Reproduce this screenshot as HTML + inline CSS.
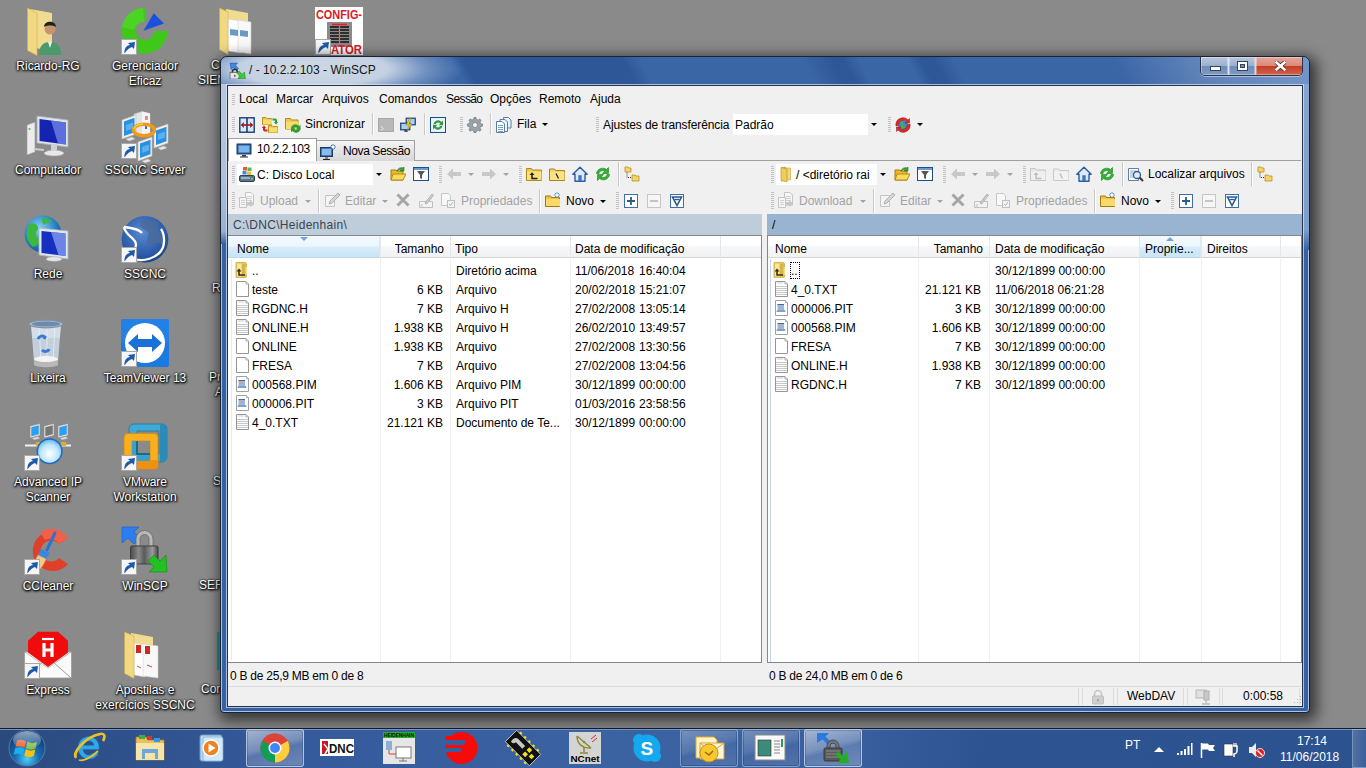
<!DOCTYPE html>
<html><head><meta charset="utf-8">
<style>
*{box-sizing:border-box}
html,body{margin:0;padding:0}
body{width:1366px;height:768px;position:relative;overflow:hidden;background:#8a8a8a;font-family:"Liberation Sans",sans-serif;font-size:12px;color:#000}
.a{position:absolute}
.t{position:absolute;white-space:nowrap;line-height:14px}
.r{text-align:right}
svg.i{position:absolute;width:16px;height:16px;overflow:visible}
.di{position:absolute;width:96px;text-align:center;color:#fff;font-size:12px;line-height:15px;text-shadow:0 0 2px #000,1px 1px 2px #000,0 1px 3px #000}
.dic{position:absolute;width:48px;height:48px;overflow:visible}
#frame{left:220px;top:56px;width:1090px;height:657px;border:1px solid #1a2333;border-radius:7px 7px 4px 4px;
 background:#3462a3;box-shadow:3px 4px 14px 4px rgba(0,0,0,.6), inset 0 0 0 1px rgba(215,228,248,.75);overflow:hidden}
#client{left:227px;top:85px;width:1076px;height:622px;background:#f0f0f0;border:1px solid #25324a;box-shadow:0 0 0 1px rgba(220,232,250,.7)}
.grip{position:absolute;width:3px;background:repeating-linear-gradient(#c2c2c2 0 1px,transparent 1px 2px)}
.sep{position:absolute;width:2px;border-left:1px solid #c8c8c8;border-right:1px solid #fff}
.dis{color:#a3a3a3}
.dd{position:absolute;width:0;height:0;border-left:3px solid transparent;border-right:3px solid transparent;border-top:3px solid #000}
.dd.g{border-top-color:#a3a3a3}
.combo{position:absolute;background:#fff;height:21px}
.combo .btn{position:absolute;right:0;top:0;width:12px;height:21px;background:#f0f0f0}
.combo .btn:after{content:"";position:absolute;left:3px;top:9px;border-left:3px solid transparent;border-right:3px solid transparent;border-top:3px solid #000}
.list{position:absolute;background:#fff;border:1px solid #828790}
.hdr{position:absolute;height:22px;background:linear-gradient(#fff 0,#fff 45%,#f6f7f9 50%,#f1f2f4 100%);border-bottom:1px solid #d5d5d5}
.hsep{position:absolute;top:0;width:1px;height:22px;background:#e4e6ea}
.csep{position:absolute;width:1px;background:#f0f0f0}
.tab{position:absolute}
#taskbar{left:0;top:728px;width:1366px;height:40px;background:linear-gradient(100deg,#2a4a7e 0,#35599a 20%,#3b63a2 45%,#395f9e 62%,#2d5391 72%,#2c5290 100%);border-top:1px solid #0f1b2e;box-shadow:inset 0 1px 0 #7593c4}
.tb{position:absolute;top:1px;height:38px;width:58px;border-radius:3px}
.tb.on{border:1px solid rgba(220,232,255,.55);background:linear-gradient(rgba(255,255,255,.28),rgba(255,255,255,.12));box-shadow:inset 0 0 0 1px rgba(0,0,0,.15)}
</style></head><body>
<svg width="0" height="0" style="position:absolute">
<defs>
<symbol id="fold" viewBox="0 0 16 16"><path d="M1 3h5l1 1.5h8v10H1z" fill="#f4d46a" stroke="#b8901c" stroke-width="1"/><path d="M1.5 6h13.5v8H1.5z" fill="#fbe490"/></symbol>
<symbol id="file" viewBox="0 0 16 16"><path d="M1.5 .5h9.5l2.5 2.5v12.5h-12z" fill="#fff" stroke="#959595"/><path d="M11 .5v2.5h2.5" fill="#f0f0f0" stroke="#a8a8a8"/></symbol>
<symbol id="txt" viewBox="0 0 16 16"><path d="M1.5 .5h9.5l2.5 2.5v12.5h-12z" fill="#fff" stroke="#959595"/><path d="M2 5.5h11M2 7.5h11M2 9.5h11M2 11.5h11M2 13.5h11" stroke="#c4c8cc"/><path d="M3 2.5l1-1 1 1 1-1 1 1 1-1 1 1" fill="none" stroke="#b0b0b0" stroke-width=".7"/><path d="M11 .5v2.5h2.5" fill="#f0f0f0" stroke="#a8a8a8"/></symbol>
<symbol id="pim" viewBox="0 0 16 16"><path d="M1.5 .5h10l2 2v13h-12z" fill="#fff" stroke="#a0a0a0"/><path d="M11.5 .5v2h2" fill="#f0f0f0" stroke="#b0b0b0"/><rect x="3.5" y="4" width="6.5" height="6" fill="#9ab8dc"/><rect x="3.5" y="4" width="6.5" height="1" fill="#4a6a98"/><rect x="4.8" y="6" width="2" height="2" fill="#e0a070"/><path d="M3 10h8l.5 2h-9z" fill="#7fa2c8"/></symbol>
<symbol id="updir" viewBox="0 0 16 16"><path d="M1 2h5l1 1.5h8v11H1z" fill="#f0cc50" stroke="#b08a10"/><path d="M2 5h13v9H2z" fill="#f9df7a"/><path d="M10 6v5H5M7 9l-2 2 2 2" fill="none" stroke="#202020" stroke-width="1.3"/></symbol>
<symbol id="mon" viewBox="0 0 16 16"><rect x="1" y="2" width="14" height="10" fill="#2d5d9a" stroke="#1d3a60"/><rect x="2.5" y="3.5" width="11" height="7" fill="#79b4ec"/><path d="M6 13h4v1.5H6z" fill="#333"/><path d="M4 15h8" stroke="#222"/></symbol>
<symbol id="filter" viewBox="0 0 16 16"><rect x=".5" y="1.5" width="15" height="13" fill="#fff" stroke="#1d4f8f"/><rect x="1" y="2" width="14" height="2" fill="#6f9ad0"/><path d="M4 5h8l-3 4v4l-2-1V9z" fill="#555"/></symbol>
<symbol id="openf" viewBox="0 0 16 16"><path d="M1 4h5l1 1h6v9H1z" fill="#e9b830" stroke="#a47a08"/><path d="M3 8h13l-3 6H1z" fill="#f8dc60" stroke="#b88a10"/><path d="M7 5c1-3 4-4 6-3l1-1v4h-4l1.2-1c-1.5-1-3 0-4 1z" fill="#3aa33a" stroke="#1e7a1e" stroke-width=".6"/></symbol>
<symbol id="home" viewBox="0 0 16 16"><path d="M8 1.2L.8 8.3h2.2v7h10v-7h2.2z" fill="#dfe9f6" stroke="#2a5aa0" stroke-width="1.4" stroke-linejoin="round"/><rect x="6.3" y="9.2" width="3.4" height="6" fill="#3a78c8"/></symbol>
<symbol id="refr" viewBox="0 0 16 16"><path d="M1.5 7.5C2 3 7.5 .5 11.5 3.5L13.5 1.5v6h-6l2.2-2.2C7.5 3.8 4.5 4.8 4 7.5z" fill="#2fb52f" stroke="#17801a" stroke-width=".6"/><path d="M14.5 8.5C14 13 8.5 15.5 4.5 12.5L2.5 14.5v-6h6l-2.2 2.2c2.2 1.5 5.2.5 5.7-2.2z" fill="#2fb52f" stroke="#17801a" stroke-width=".6"/></symbol>
<symbol id="tree" viewBox="0 0 16 16"><path d="M1 1h3l1 1h2v4H1z" fill="#f4d46a" stroke="#b8901c" stroke-width=".8"/><path d="M8 9h3l1 1h3v5H8z" fill="#f4d46a" stroke="#b8901c" stroke-width=".8"/><path d="M3 6.5v5h4.5" fill="none" stroke="#333" stroke-dasharray="1 1"/></symbol>
<symbol id="parentd" viewBox="0 0 16 16"><path d="M.5 2.5h5l1 1.5h9v10.5H.5z" fill="#eec850" stroke="#b08a18"/><path d="M1 5.5h14.5v8.5H1z" fill="#fae07c"/><path d="M6 8v4.5h5.5" fill="none" stroke="#1a1a1a" stroke-width="1.5"/><path d="M3.5 9L6 6.3 8.5 9z" fill="#1a1a1a"/></symbol>
<symbol id="updir2" viewBox="0 0 16 16"><path d="M3 .5h9.5l1 1.5v13l-1 .8H3.5L3 15z" fill="#e6c65a" stroke="#c8a840" stroke-width=".8"/><path d="M4 1.5h4.5v13H4z" fill="#f6e6a0"/><path d="M9 2h3.5v12H9z" fill="#d8b440"/><path d="M12.5 5h1.5v8h-1.5z" fill="#f2dc88"/><path d="M6 8.5v4.5h6" fill="none" stroke="#3a3020" stroke-width="1.6"/><path d="M3.5 9.5L6 6.5l2.5 3z" fill="#3a3020"/></symbol>
<symbol id="rootd" viewBox="0 0 16 16"><path d="M.5 3h5l1 1.5h9v10H.5z" fill="#f4d46a" stroke="#a8841a"/><path d="M1 6h14.5v8H1z" fill="#fae287"/><path d="M7 7.5l2.5 5" stroke="#222" stroke-width="1.2"/></symbol>
<symbol id="plus" viewBox="0 0 16 16"><rect x="1.5" y="1.5" width="13" height="13" fill="#fff" stroke="#3d6ea6"/><path d="M8 4v8M4 8h8" stroke="#2a5a90" stroke-width="1.8"/></symbol>
<symbol id="minus" viewBox="0 0 16 16"><rect x="1.5" y="1.5" width="13" height="13" fill="#f6f6f6" stroke="#c6c6c6"/><path d="M4 8h8" stroke="#c0c0c0" stroke-width="1.8"/></symbol>
<symbol id="fsel" viewBox="0 0 16 16"><rect x="1.5" y="1.5" width="13" height="13" fill="#fff" stroke="#3d6ea6"/><path d="M3.5 4h9L8 12.5z" fill="none" stroke="#2a5a90" stroke-width="1.6"/><path d="M5.5 6.5h5" stroke="#2a5a90" stroke-width="1.4"/></symbol>
<symbol id="newf" viewBox="0 0 16 16"><path d="M.5 4h5l1 1.5h8v9H.5z" fill="#eec348" stroke="#a47a10"/><path d="M1 7h14v7H1z" fill="#f8da6a"/><path d="M12 0v6M9 3h6M10 1l4 4M14 1l-4 4" stroke="#5a8cc8" stroke-width="1"/><circle cx="12" cy="3" r="1.5" fill="#fff"/></symbol>
<symbol id="xdel" viewBox="0 0 16 16"><path d="M2.5 2.5l11 11M13.5 2.5l-11 11" stroke="#a6a6a6" stroke-width="3"/></symbol>
<symbol id="edit" viewBox="0 0 16 16"><path d="M1.5 3.5h9v11h-9z" fill="#f4f4f4" stroke="#c4c4c4"/><path d="M5 12l1-3 8-8 2 2-8 8z" fill="#d6d6d6" stroke="#b0b0b0"/></symbol>
<symbol id="ren" viewBox="0 0 16 16"><path d="M1.5 9.5h13v6h-13z" fill="#f4f4f4" stroke="#c0c0c0"/><text x="2.5" y="14.5" font-size="5" fill="#b0b0b0" font-family="Liberation Sans">x</text><path d="M7 11l7-9 1.5 1.2-7 9z" fill="#d0d0d0" stroke="#b0b0b0"/></symbol>
<symbol id="props" viewBox="0 0 16 16"><path d="M1.5 1.5h7l2 2v10h-9z" fill="#f8f8f8" stroke="#c6c6c6"/><rect x="7.5" y="8.5" width="7" height="7" fill="#f4f4f4" stroke="#c0c0c0"/><path d="M9 12l1.5 1.5L13 10" fill="none" stroke="#b0b0b0"/></symbol>
<symbol id="upl" viewBox="0 0 16 16"><path d="M6.5 .5h5.5l2.5 2.5v10h-8z" fill="#f8f8f8" stroke="#c4c4c4"/><path d="M8 4.5h5M8 6.5h5M8 8.5h5" stroke="#d0d0d0"/><path d="M.5 5.5h7v10h-7z" fill="#f6f6f6" stroke="#c4c4c4"/><path d="M2 8.5h4M2 10.5h4M2 12.5h4" stroke="#d0d0d0"/><path d="M8 10h3V8l4 3.5-4 3.5v-2H8z" fill="#c6c6c6"/></symbol>
<symbol id="back" viewBox="0 0 16 16"><path d="M1 8l6-5.5V6h8v4H7v3.5z" fill="#c8c8c8"/></symbol>
<symbol id="fwd" viewBox="0 0 16 16"><path d="M15 8L9 2.5V6H1v4h8v3.5z" fill="#c8c8c8"/></symbol>
<symbol id="pdis" viewBox="0 0 16 16"><path d="M.5 2.5h5l1 1.5h9v10.5H.5z" fill="#e8e8e8" stroke="#c4c4c4"/><path d="M1 5.5h14.5v8.5H1z" fill="#f0f0f0"/><path d="M6 8v4.5h5.5" fill="none" stroke="#bcbcbc" stroke-width="1.5"/><path d="M3.5 9L6 6.3 8.5 9z" fill="#bcbcbc"/></symbol>
<symbol id="rdis" viewBox="0 0 16 16"><path d="M.5 3h5l1 1.5h9v10H.5z" fill="#ececec" stroke="#c8c8c8"/><path d="M1 6h14.5v8H1z" fill="#f2f2f2"/><path d="M7 7.5l2.5 5" stroke="#bcbcbc" stroke-width="1.2"/></symbol>
<symbol id="find" viewBox="0 0 16 16"><path d="M.5 2.5h10v12H.5z" fill="#fff" stroke="#5f7fa8"/><path d="M2 5h6M2 7h4M2 9h4M2 11h5" stroke="#8aa8cc"/><circle cx="9" cy="9" r="3.5" fill="#dceeff" stroke="#3a5a80" stroke-width="1.3"/><path d="M11.5 11.5l3.5 3.5" stroke="#333" stroke-width="2"/></symbol>
<symbol id="drive" viewBox="0 0 16 16"><rect x=".5" y="9.5" width="15" height="6" rx="1.5" fill="#59768a" stroke="#2f4350"/><rect x="2" y="11" width="9" height="2" fill="#9ab4c4"/><rect x="12" y="12" width="2" height="1.5" fill="#6fd06f"/><path d="M4 1h4v3.5H4z" fill="#e85a2a"/><path d="M8.5 1.5h4v3.5h-4z" fill="#58b848"/><path d="M3.5 5h4v3.5h-4z" fill="#3a8ae0"/><path d="M8 5.5h4v3.5H8z" fill="#f2c020"/></symbol>
<symbol id="cmp" viewBox="0 0 16 16"><rect x=".8" y=".8" width="14.4" height="14.4" fill="#dde9f6" stroke="#1c3c78" stroke-width="1.4"/><path d="M8 1v14" stroke="#1c3c78" stroke-width="1.6"/><path d="M3 8h10" stroke="#a01818" stroke-width="1.6"/><path d="M1.8 8l3-3v6zM14.2 8l-3-3v6z" fill="#a01818"/></symbol>
<symbol id="syncf" viewBox="0 0 16 16"><path d="M.5 .5h3.5l1 1h4.5v6H.5z" fill="#eec44a" stroke="#b88a10" stroke-width=".9"/><path d="M1 2.5h9v5H1z" fill="#f8dc6c"/><path d="M6.5 8.5h3.5l1 1h4.5v6h-9z" fill="#eec44a" stroke="#b88a10" stroke-width=".9"/><path d="M7 10.5h8.5v5H7z" fill="#f8dc6c"/><path d="M10.5 1.5h2.5a2 2 0 0 1 2 2V5h1.2l-2.2 2.5L11.8 5H13V3.5h-2.5z" fill="#2ea02e"/><path d="M5.5 14.5H3a2 2 0 0 1-2-2V11H-.2L2 8.5 4.2 11H3v1.5h2.5z" fill="#d42020"/></symbol>
<symbol id="sync" viewBox="0 0 16 16"><path d="M.5 1.5h5l1 1.5h6.5v9H.5z" fill="#eec44a" stroke="#b88a10"/><path d="M1 4.5h12.5v7.5H1z" fill="#f8dc6c"/><path d="M6 11.5a4.5 4.5 0 0 1 8-2.5l1.5-1.3v4.8h-4.8l1.6-1.4A2.6 2.6 0 0 0 8 11.5z" fill="#30a030"/><path d="M15.5 11.5a4.5 4.5 0 0 1-8 2.5L6 15.3v-4.8h4.8l-1.6 1.4a2.6 2.6 0 0 0 4.3-.4z" fill="#30a030"/></symbol>
<symbol id="cons" viewBox="0 0 16 16"><rect x=".5" y="1.5" width="15" height="13" fill="#b8b8b8" stroke="#a8a8a8"/><path d="M3 9.5l2.5 2L3 13.5" fill="none" stroke="#e8e8e8"/></symbol>
<symbol id="putty" viewBox="0 0 16 16"><rect x="6" y="1" width="9.5" height="7" fill="#3d6aa6" stroke="#20406a" stroke-width=".8"/><rect x="7" y="2" width="7.5" height="5" fill="#a6d0f4"/><rect x=".5" y="6" width="9.5" height="7" fill="#3d6aa6" stroke="#20406a" stroke-width=".8"/><rect x="1.5" y="7" width="7.5" height="5" fill="#a6d0f4"/><path d="M4 14h4M6 13v2" stroke="#222"/><path d="M10 1L6 8h3l-2 6 5-7H9l2-6z" fill="#f6d020" stroke="#9a7a00" stroke-width=".5"/></symbol>
<symbol id="syncb" viewBox="0 0 16 16"><rect x=".5" y=".5" width="15" height="15" fill="#e8f2fc" stroke="#1f4a86"/><path d="M3.5 7a4.5 4.5 0 0 1 8-2l1.5-1.2v4.4H8.6l1.6-1.4a2.6 2.6 0 0 0-4.6.2z" fill="#2e9a3a"/><path d="M12.5 9a4.5 4.5 0 0 1-8 2L3 12.2V7.8h4.4l-1.6 1.4a2.6 2.6 0 0 0 4.6-.2z" fill="#2e9a3a"/></symbol>
<symbol id="gear" viewBox="0 0 16 16"><path d="M7 .5h2l.4 2 1.6.7 1.7-1.2 1.4 1.4-1.2 1.7.7 1.6 2 .4v2l-2 .4-.7 1.6 1.2 1.7-1.4 1.4-1.7-1.2-1.6.7-.4 2H7l-.4-2-1.6-.7-1.7 1.2-1.4-1.4 1.2-1.7-.7-1.6-2-.4V7l2-.4.7-1.6-1.2-1.7 1.4-1.4 1.7 1.2L6.6 2.5z" fill="#9aa2aa" stroke="#6c747c" stroke-width=".7"/><circle cx="8" cy="8" r="2.6" fill="#f0f0f0" stroke="#6c747c" stroke-width=".7"/></symbol>
<symbol id="queue" viewBox="0 0 16 16"><path d="M7.5 .5h5l2.5 2.5v8h-7.5z" fill="#e8f0fa" stroke="#5a7ea8"/><path d="M4 2.5h5l2.5 2.5v9.5H4z" fill="#eef4fb" stroke="#5a7ea8"/><path d="M.5 4.5h5.5l2.5 2.5v8.5H.5z" fill="#fff" stroke="#5a7ea8"/><path d="M2 8.5h5M2 10.5h5M2 12.5h5M2 14.5h5" stroke="#7c9cc4"/></symbol>
<symbol id="tset" viewBox="0 0 16 16"><circle cx="8" cy="8" r="5" fill="#3a8ad0"/><path d="M5 5c2 0 3 2 2 4s2 2 3 1" stroke="#4ab04a" stroke-width="2" fill="none"/><path d="M1 9a7 7 0 0 1 12-6l1.5-1.5V6h-4.5L12 4.6A5 5 0 0 0 3.5 8.5z" fill="#e02828" stroke="#901010" stroke-width=".5"/><path d="M15 7a7 7 0 0 1-12 6l-1.5 1.5V10H6l-1.6 1.4A5 5 0 0 0 12.5 7.5z" fill="#e02828" stroke="#901010" stroke-width=".5"/></symbol>
<symbol id="newsess" viewBox="0 0 16 16"><rect x=".5" y="3.5" width="12" height="9" fill="#2d5d9a" stroke="#1d3a60"/><rect x="1.7" y="4.7" width="9.6" height="6.6" fill="#86bdf0"/><path d="M5 13.5h3v1H5z" fill="#333"/><path d="M3 15.5h7" stroke="#222"/><path d="M13 0v6M10 3h6M11 1l4 4M15 1l-4 4" stroke="#3a6ab0" stroke-width="1"/><circle cx="13" cy="3" r="1.6" fill="#fff"/></symbol>
<symbol id="sfold" viewBox="0 0 16 16"><path d="M3 1.5l5-1v14l-5 1z" fill="#d8b440"/><path d="M3.5 2h9v12h-9z" fill="#f4d878" stroke="#c0a040" stroke-width=".6"/><path d="M3 1.5l6 1.5v13l-6-1.5z" fill="#f0cc58" stroke="#b0902a" stroke-width=".6"/></symbol>
<symbol id="lock" viewBox="0 0 16 16"><path d="M4.5 7V5a3.5 3.5 0 0 1 7 0v2" fill="none" stroke="#c4c4c4" stroke-width="1.6"/><rect x="2.5" y="7" width="11" height="8" rx="1" fill="#cfcfcf" stroke="#bdbdbd"/><rect x="7" y="10" width="2" height="2.5" fill="#a8a8a8"/></symbol>
<symbol id="net" viewBox="0 0 16 16"><rect x="1" y="1" width="10" height="8" fill="#d6d6d6" stroke="#bdbdbd"/><path d="M2 3h8M2 5h8M2 7h8" stroke="#eaeaea"/><rect x="9" y="2" width="5" height="9" fill="#c8c8c8" stroke="#b0b0b0"/><path d="M11 11v3M7 15h8" stroke="#b8b8b8" stroke-width="1.3"/></symbol>
</defs></svg>
<svg class="dic" style="left:24px;top:7px" viewBox="0 0 48 48"><path d="M6 2l22 4v38L6 40z" fill="#f0dc90"/><path d="M3.5 1l9.5 5v42.5l-9.5-5z" fill="#f2d880" stroke="#d0b050" stroke-width=".6"/>
<circle cx="26" cy="22" r="5.5" fill="#c89470"/><path d="M20 20c0-7 12-7 12 0-2-2-10-2-12 0z" fill="#222"/><path d="M15 48c0-9 4-13 11-13s11 4 11 13z" fill="#4a9a6a"/><path d="M24 35h4l-2 6z" fill="#eee"/></svg>
<div class="di" style="left:0px;top:59px;width:96px">Ricardo-RG</div>
<svg class="dic" style="left:24px;top:111px" viewBox="0 0 48 48"><path d="M3 14l8-3v30l-8 3z" fill="#ececec" stroke="#9a9a9a" stroke-width=".6"/><circle cx="5.5" cy="18" r="1" fill="#3c3"/><path d="M13 5l31 4v27l-31-4z" fill="#dfe4ea" stroke="#a8b0ba" stroke-width=".8"/><path d="M15.5 8l26.5 3.5v22L15.5 30z" fill="#1424b0"/><path d="M27 9.5l15 2v22l-8-1z" fill="#7a90f0" opacity=".7"/><path d="M20 42c3-4 17-4 20 0 0 4-20 4-20 0z" fill="#e8e8e8" stroke="#aaa" stroke-width=".6"/><path d="M27 33h6v6h-6z" fill="#d0d0d0"/><path d="M10 38l10 1" stroke="#ccc" stroke-width="2"/></svg>
<div class="di" style="left:0px;top:163px;width:96px">Computador</div>
<svg class="dic" style="left:24px;top:215px" viewBox="0 0 48 48"><defs><radialGradient id="gl" cx=".4" cy=".35" r=".7"><stop offset="0" stop-color="#8fd0f8"/><stop offset=".6" stop-color="#2a86c8"/><stop offset="1" stop-color="#134a8a"/></radialGradient></defs><circle cx="19" cy="19" r="18.5" fill="url(#gl)"/><path d="M5 9c4-2 8 0 9 3s-3 5-2 8 4 3 3 7-4 4-6 5c-4-3-7-9-6-15zM18 3c3 1 7 0 10 3-2 2-5 1-7 3s-3-2-3-6zM27 14c3 0 6 2 8 1l1 6c-3 0-6-2-9-4z" fill="#3cb83c"/>
<path d="M15 13l29 3v28l-29-4z" fill="#dfe6ee" stroke="#aab4c0" stroke-width=".8"/><path d="M17.5 16l24 2.5v22.5L17.5 38z" fill="#1530c0"/><path d="M27 17l14.5 1.5V41l-7-1z" fill="#8aa0f0" opacity=".75"/><path d="M22 44c2-3 14-3 16 0 0 3-16 3-16 0z" fill="#e8e8e8" stroke="#b0b0b0" stroke-width=".6"/></svg>
<div class="di" style="left:0px;top:267px;width:96px">Rede</div>
<svg class="dic" style="left:24px;top:319px" viewBox="0 0 48 48"><path d="M7 5h30l-3 38c-3 3-21 3-24 0z" fill="#c9d6e2" opacity=".9"/><path d="M7 5h30l-1.2 14H8.2z" fill="#dbe4ee" opacity=".7"/><path d="M23 8v34M15 7l2 35M31 7l-2 35" stroke="#e8eef6" stroke-width="1" opacity=".8"/><ellipse cx="22" cy="5" rx="17" ry="3.8" fill="#a6bbd0" stroke="#7f93a8" stroke-width="1.2"/><ellipse cx="22" cy="5" rx="14" ry="2.4" fill="#6e8aa8"/><path d="M10 40c3 4 20 4 24 0v6c-3 3-21 3-24 0z" fill="#b8b8b8"/><ellipse cx="22" cy="40" rx="12" ry="3" fill="#f4f4f4"/><path d="M14 20c1-3 5-4 7-2l-1 2M18 31c2 2 6 2 7-1" stroke="#3a78d8" stroke-width="3" fill="none"/></svg>
<div class="di" style="left:0px;top:371px;width:96px">Lixeira</div>
<svg class="dic" style="left:24px;top:423px" viewBox="0 0 48 48"><g id="m1"><path d="M6 3l10-2.5v12L6 15z" fill="#e8e8e8" stroke="#888" stroke-width=".6"/><path d="M7.3 4.3l7.5-2v9l-7.5 2z" fill="#2aa0ee"/><path d="M8 15l6-1.5 2 2-6 1.5z" fill="#ddd" stroke="#999" stroke-width=".5"/></g>
<path d="M20 3l10-2.5v12L20 15z" fill="#e8e8e8" stroke="#888" stroke-width=".6"/><path d="M21.3 4.3l7.5-2v9l-7.5 2z" fill="#777"/>
<path d="M34 3l10-2.5v12L34 15z" fill="#e8e8e8" stroke="#888" stroke-width=".6"/><path d="M35.3 4.3l7.5-2v9l-7.5 2z" fill="#2aa0ee"/><path d="M36 15l6-1.5 2 2-6 1.5z" fill="#ddd" stroke="#999" stroke-width=".5"/>
<path d="M1 22.5h46" stroke="#f0f0f0" stroke-width="2"/><rect x="12" y="19" width="5" height="4" fill="#e0b020"/><rect x="37" y="19" width="5" height="4" fill="#e0b020"/>
<defs><radialGradient id="mg" cx=".5" cy=".6" r=".6"><stop offset="0" stop-color="#fff"/><stop offset=".6" stop-color="#bfe6ff"/><stop offset="1" stop-color="#5ab4f0"/></radialGradient></defs><circle cx="25.6" cy="28.2" r="12.3" fill="url(#mg)" stroke="#1a6ac8" stroke-width="1.5"/><g transform="translate(0,32)"><rect x=".5" y=".5" width="15" height="15" fill="#f6f6f6" stroke="#a8a8a8"/><path d="M3.5 14.5C3 9.5 5.5 6.5 9 6L7 4l7-1-1 7-2-2c-2.5.5-4.5 2.5-7.5 6.5z" fill="#1e5aa8"/></g></svg>
<div class="di" style="left:-7px;top:475px;width:110px">Advanced IP<br>Scanner</div>
<svg class="dic" style="left:24px;top:527px" viewBox="0 0 48 48"><path d="M44 11A20 20 0 1 0 44 37L35 31A10.5 10.5 0 1 1 35 17z" fill="#e0402a"/><path d="M44 11A20 20 0 0 0 16 5l5 8a10.5 10.5 0 0 1 14 4z" fill="#f0604a"/><path d="M31 6L23 23" stroke="#2a74d0" stroke-width="3" stroke-linecap="round"/><path d="M17 22l9 4-4 6-8-4z" fill="#3a86e0"/><path d="M14 28l8 4c-3 8-8 14-16 15-3-2-4-4-4-6 6-2 9-7 12-13z" fill="#f0cc88" stroke="#d0a060" stroke-width=".6"/><g transform="translate(0,32)"><rect x=".5" y=".5" width="15" height="15" fill="#f6f6f6" stroke="#a8a8a8"/><path d="M3.5 14.5C3 9.5 5.5 6.5 9 6L7 4l7-1-1 7-2-2c-2.5.5-4.5 2.5-7.5 6.5z" fill="#1e5aa8"/></g></svg>
<div class="di" style="left:0px;top:579px;width:96px">CCleaner</div>
<svg class="dic" style="left:24px;top:631px" viewBox="0 0 48 48"><path d="M0.5 21h47v26h-47z" fill="#fafafa" stroke="#999" stroke-width=".8"/><path d="M1 47l19-17M47 47L28 30" stroke="#9a9a9a" stroke-width="1"/><path d="M14 .8h20l10 9v12L24 36 4 21.5V9.8z" fill="#f00c0c"/><path d="M1 21l23 16 23-16" fill="none" stroke="#aaa" stroke-width=".8"/><path d="M18 8h12" stroke="#fff" stroke-width="2.2"/><path d="M20 12v14M28 12v14M20 19h8" stroke="#fff" stroke-width="3.2"/><g transform="translate(0,32)"><rect x=".5" y=".5" width="15" height="15" fill="#f6f6f6" stroke="#a8a8a8"/><path d="M3.5 14.5C3 9.5 5.5 6.5 9 6L7 4l7-1-1 7-2-2c-2.5.5-4.5 2.5-7.5 6.5z" fill="#1e5aa8"/></g></svg>
<div class="di" style="left:0px;top:683px;width:96px">Express</div>
<svg class="dic" style="left:121px;top:7px" viewBox="0 0 48 48"><path d="M25 .7A23 23 0 1 0 46.8 24H33.5A9.5 9.5 0 1 1 25 14z" fill="#3fc81a"/><path d="M22 1A23 23 0 0 0 1 20l12 3a10 10 0 0 1 10-8z" fill="#52d82a" opacity=".7"/><path d="M32.7 6.2L43 16.4 22.5 23.7z" fill="#1a50e0"/><g transform="translate(0,32)"><rect x=".5" y=".5" width="15" height="15" fill="#f6f6f6" stroke="#a8a8a8"/><path d="M3.5 14.5C3 9.5 5.5 6.5 9 6L7 4l7-1-1 7-2-2c-2.5.5-4.5 2.5-7.5 6.5z" fill="#1e5aa8"/></g></svg>
<div class="di" style="left:97px;top:59px;width:96px">Gerenciador<br>Eficaz</div>
<svg class="dic" style="left:121px;top:111px" viewBox="0 0 48 48"><path d="M13 3l8-2.5 8 2v20l-8 2.5-8-2z" fill="#e4e4e4" stroke="#b8b8b8" stroke-width=".6"/><path d="M21 .5l8 2v20l-8 2.5z" fill="#f4f4f4"/><path d="M24 6h3M24 8h3" stroke="#c03030" stroke-width="1"/><path d="M24 14h2v4h-2z" fill="#3a6ac8"/>
<g id="mo"><path d="M1 9l14-5v19l-14 5z" fill="#f0f0f0" stroke="#c0c0c0" stroke-width=".6"/><path d="M3 10.5l10.5-3.8v14.5L3 25z" fill="#2a90e0"/><path d="M5 14l7-2.5v6L5 20z" fill="#7cc8f8" opacity=".6"/><path d="M5 28l6-2 3 2-6 2z" fill="#e6e6e6" stroke="#bbb" stroke-width=".5"/></g>
<g transform="translate(32,9)"><path d="M1 9l14-5v19l-14 5z" fill="#f0f0f0" stroke="#c0c0c0" stroke-width=".6"/><path d="M3 10.5l10.5-3.8v14.5L3 25z" fill="#2a90e0"/><path d="M5 14l7-2.5v6L5 20z" fill="#7cc8f8" opacity=".6"/><path d="M5 28l6-2 3 2-6 2z" fill="#e6e6e6" stroke="#bbb" stroke-width=".5"/></g>
<g transform="translate(16,22)"><path d="M1 9l14-5v19l-14 5z" fill="#f0f0f0" stroke="#c0c0c0" stroke-width=".6"/><path d="M3 10.5l10.5-3.8v14.5L3 25z" fill="#2a90e0"/><path d="M5 14l7-2.5v6L5 20z" fill="#7cc8f8" opacity=".6"/><path d="M5 28l6-2 3 2-6 2z" fill="#e6e6e6" stroke="#bbb" stroke-width=".5"/></g>
<ellipse cx="23" cy="19" rx="10.5" ry="5.8" fill="none" stroke="#f29a18" stroke-width="3.4"/><path d="M13 18a10 5.5 0 0 1 9-5" stroke="#fcd040" stroke-width="1.5" fill="none"/><g transform="translate(0,32)"><rect x=".5" y=".5" width="15" height="15" fill="#f6f6f6" stroke="#a8a8a8"/><path d="M3.5 14.5C3 9.5 5.5 6.5 9 6L7 4l7-1-1 7-2-2c-2.5.5-4.5 2.5-7.5 6.5z" fill="#1e5aa8"/></g></svg>
<div class="di" style="left:90px;top:163px;width:110px">SSCNC Server</div>
<svg class="dic" style="left:121px;top:215px" viewBox="0 0 48 48"><defs><radialGradient id="sg" cx=".45" cy=".35" r=".7"><stop offset="0" stop-color="#5a8ad0"/><stop offset=".7" stop-color="#2a5aa8"/><stop offset="1" stop-color="#173e7e"/></radialGradient></defs><circle cx="24" cy="24.3" r="23.3" fill="url(#sg)"/><path d="M20 6c6-3 14-2 18 3-3 3-2 8 2 9s4 8 2 12c-3-3-8-3-10 0s-6 1-6-4 4-8 0-10-8-4-6-10z" fill="#4a6a98" opacity=".8"/><path d="M3 12c8 1 15 2 18 6" stroke="#fff" stroke-width="2.3" fill="none"/><path d="M3 12c2 10 12 10 12 18s-10 8-2 14c10 3 22-1 27-8s3-18 0-22" stroke="#fff" stroke-width="2.3" fill="none"/><g transform="translate(0,32)"><rect x=".5" y=".5" width="15" height="15" fill="#f6f6f6" stroke="#a8a8a8"/><path d="M3.5 14.5C3 9.5 5.5 6.5 9 6L7 4l7-1-1 7-2-2c-2.5.5-4.5 2.5-7.5 6.5z" fill="#1e5aa8"/></g></svg>
<div class="di" style="left:97px;top:267px;width:96px">SSCNC</div>
<svg class="dic" style="left:121px;top:319px" viewBox="0 0 48 48"><rect x="0" y="0" width="48" height="48" rx="2" fill="#1b7ae0"/><rect x="0" y="0" width="48" height="24" rx="2" fill="#2a86ea" opacity=".6"/><circle cx="24" cy="24" r="20" fill="#fff"/><path d="M7 24l10-9v5h14v-5l10 9-10 9v-5H17v5z" fill="#1a72d8"/><g transform="translate(0,32)"><rect x=".5" y=".5" width="15" height="15" fill="#f6f6f6" stroke="#a8a8a8"/><path d="M3.5 14.5C3 9.5 5.5 6.5 9 6L7 4l7-1-1 7-2-2c-2.5.5-4.5 2.5-7.5 6.5z" fill="#1e5aa8"/></g></svg>
<div class="di" style="left:90px;top:371px;width:110px">TeamViewer 13</div>
<svg class="dic" style="left:121px;top:423px" viewBox="0 0 48 48"><path d="M13 1h28a5 5 0 0 1 5 5v28a5 5 0 0 1-5 5H13a5 5 0 0 1-5-5V6a5 5 0 0 1 5-5zM16 8v23h22V8z" fill="#40aad4" fill-rule="evenodd" stroke="#1a7aa0" stroke-width=".8"/><path d="M41 1a5 5 0 0 1 5 5v28a5 5 0 0 1-5 5h-2V1z" fill="#2a8ab8"/>
<path d="M7 10.5h26a4 4 0 0 1 4 4V42a4 4 0 0 1-4 4H7a4 4 0 0 1-4-4V14.5a4 4 0 0 1 4-4zM11 18v20h18V18z" fill="#f8b020" fill-rule="evenodd" stroke="#d88a00" stroke-width=".8"/><path d="M3 37h34v5a4 4 0 0 1-4 4H7a4 4 0 0 1-4-4z" fill="#f09010"/><path d="M11 18h18v20H11z" fill="#3aa0cc"/><path d="M16 18h13v13H16z" fill="#8a8a8a"/><path d="M16 18v13h13" fill="none" stroke="#1a6a90" stroke-width="2"/><g transform="translate(0,32)"><rect x=".5" y=".5" width="15" height="15" fill="#f6f6f6" stroke="#a8a8a8"/><path d="M3.5 14.5C3 9.5 5.5 6.5 9 6L7 4l7-1-1 7-2-2c-2.5.5-4.5 2.5-7.5 6.5z" fill="#1e5aa8"/></g></svg>
<div class="di" style="left:97px;top:475px;width:96px">VMware<br>Workstation</div>
<svg class="dic" style="left:121px;top:527px" viewBox="0 0 48 48"><path d="M1 0h17l-5 5 6 6-6 6-6-6-6 5z" fill="#2a7ef0" stroke="#1a5ac0" stroke-width=".6"/><path d="M15 19v-7a8.5 8.5 0 0 1 17 0v7h-4v-7a4.5 4.5 0 0 0-9 0v7z" fill="#b8b8b8" stroke="#6a6a6a" stroke-width=".8"/>
<defs><linearGradient id="lb" x1="0" x2="1"><stop offset="0" stop-color="#4a4a4a"/><stop offset=".3" stop-color="#8a8a8a"/><stop offset=".5" stop-color="#5a5a5a"/><stop offset=".8" stop-color="#9a9a9a"/><stop offset="1" stop-color="#4a4a4a"/></linearGradient></defs><rect x="9.5" y="19" width="27.5" height="18" rx="1.5" fill="url(#lb)" stroke="#333" stroke-width=".8"/>
<path d="M46 45H28l5-5-6-6 6-6 6 6 6-6z" fill="#22c022" stroke="#128a12" stroke-width=".6"/><g transform="translate(0,32)"><rect x=".5" y=".5" width="15" height="15" fill="#f6f6f6" stroke="#a8a8a8"/><path d="M3.5 14.5C3 9.5 5.5 6.5 9 6L7 4l7-1-1 7-2-2c-2.5.5-4.5 2.5-7.5 6.5z" fill="#1e5aa8"/></g></svg>
<div class="di" style="left:97px;top:579px;width:96px">WinSCP</div>
<svg class="dic" style="left:121px;top:631px" viewBox="0 0 48 48"><path d="M10 2l22 4v38l-22-4z" fill="#f0dc90"/><path d="M13 12l11 2v32l-11-2z" fill="#fff" stroke="#ccc" stroke-width=".5"/><path d="M22 13l15 2v32l-15-2z" fill="#f8f8f8" stroke="#ccc" stroke-width=".5"/><path d="M15 14h5v8h-5zM24 15h5v8h-5z" fill="#cc2a20"/><path d="M16 35l4 2M26 34l5 2" stroke="#e04040" stroke-width="1"/><path d="M3.6 1l9.4 4v42.5l-9.4-5z" fill="#f2d880" stroke="#d0b050" stroke-width=".6"/></svg>
<div class="di" style="left:85px;top:683px;width:120px">Apostilas e<br>exercícios SSCNC</div>
<svg class="dic" style="left:218px;top:7px" viewBox="0 0 48 48"><path d="M8 2l22 4v38l-22-4z" fill="#f0dc90"/><path d="M10 12l13 2v32l-13-2z" fill="#fff" stroke="#ccc" stroke-width=".5"/><path d="M20 13l13 2v32l-13-2z" fill="#f8f8f8" stroke="#ccc" stroke-width=".5"/><path d="M12 22l8 1v6l-8-1zM22 23l8 1v6l-8-1z" fill="#6a9ac0"/><path d="M1.6 1l8.4 4v42.5l-8.4-5z" fill="#f2d880" stroke="#d0b050" stroke-width=".6"/></svg>
<svg class="dic" style="left:315px;top:7px" viewBox="0 0 48 48"><rect x="0" y="0" width="48" height="48" fill="#fff"/><text x="1" y="12" font-family="Liberation Sans" font-weight="bold" font-size="12" fill="#e01828" textLength="46" lengthAdjust="spacingAndGlyphs">CONFIG-</text><rect x="12" y="15" width="25" height="25" fill="#8a8a8a"/><path d="M15 20h19M15 23h19M15 26h19M15 29h19M15 32h19M15 35h19" stroke="#111" stroke-width="1.7"/><path d="M24.5 17v21" stroke="#ff6070" stroke-width="1.2"/><path d="M17 17.5h15" stroke="#e02030" stroke-width="1.5"/><text x="16" y="47" font-family="Liberation Sans" font-weight="bold" font-size="12" fill="#e01828" textLength="31" lengthAdjust="spacingAndGlyphs">ATOR</text><g transform="translate(0,32)"><rect x=".5" y=".5" width="15" height="15" fill="#f6f6f6" stroke="#a8a8a8"/><path d="M3.5 14.5C3 9.5 5.5 6.5 9 6L7 4l7-1-1 7-2-2c-2.5.5-4.5 2.5-7.5 6.5z" fill="#1e5aa8"/></g></svg>
<div class="di" style="left:211px;top:58px;width:auto;text-align:left">CONFIG</div>
<div class="di" style="left:198px;top:73px;width:auto;text-align:left">SIEMENS</div>
<div class="di" style="left:212px;top:281px;width:auto;text-align:left">Rede</div>
<div class="di" style="left:209px;top:370px;width:auto;text-align:left">Programas</div>
<div class="di" style="left:215px;top:385px;width:auto;text-align:left">Apostilas</div>
<div class="di" style="left:213px;top:474px;width:auto;text-align:left">Siemens</div>
<div class="di" style="left:199px;top:578px;width:auto;text-align:left">SERVIDOR</div>
<div class="di" style="left:201px;top:682px;width:auto;text-align:left">Configurações</div>
<div class="a" style="left:217px;top:632px;width:4px;height:38px;background:linear-gradient(90deg,#1a8a8a,#2ab0a8)"></div>
<div id="frame" class="a"></div>
<div class="a" style="left:221px;top:57px;width:1088px;height:28px;border-radius:6px 6px 0 0;background:linear-gradient(62deg,#3b66a6 6px,#3b66a6 215px,#2d5797 226px,#2d5797 366px,#3b66a6 382px,#3b66a6 525px,#2d5797 552px,#2d5797 560px,#3b66a6 575px,#3b66a6 618px,#2d5797 630px,#2d5797 641px,#3b66a6 659px,#3b66a6 800px,#5f83b9 871px,#7394c6 967px)"></div>
<div class="a" style="left:221px;top:57px;width:300px;height:28px;border-radius:6px 0 0 0;background:radial-gradient(ellipse 150px 34px at 92px 12px,rgba(206,216,228,1) 0,rgba(200,212,228,.97) 50%,rgba(150,175,210,.6) 75%,rgba(52,98,163,0) 100%)"></div>
<svg class="a" style="left:229px;top:62px;width:17px;height:17px" viewBox="0 0 16 16"><path d="M1 1h7L6 3l3 3-2 2-3-3-2 2z" fill="#3a8ae8" stroke="#1a4a98" stroke-width=".5"/><path d="M2.5 9a3 3 0 0 1 6 0v1.5H7V9a1.5 1.5 0 0 0-3 0v1.5H2.5z" fill="#333"/><rect x="1" y="10" width="8.5" height="6" fill="#e6e6e6" stroke="#555" stroke-width=".6"/><rect x="5" y="12" width="1" height="2" fill="#333"/><path d="M15.5 15.5h-7l2-2-3-3 2-2 3 3 2-2z" fill="#3cc83c" stroke="#1a8a1a" stroke-width=".5"/></svg>
<div class="t " style="left:249px;top:63px;color:#141414">/ - 10.2.2.103 - WinSCP</div>
<div class="a" style="left:1200px;top:57px;width:103px;height:19px;border:1px solid #26344c;border-top:none;border-radius:0 0 5px 5px;overflow:hidden;box-shadow:0 1px 0 rgba(255,255,255,.45)"><div class="a" style="left:0;top:0;width:27px;height:18px;background:linear-gradient(#b8c7dc,#9cb0cd 48%,#6f8db9 52%,#7d9ac4);box-shadow:inset 0 0 0 1px rgba(255,255,255,.35)"></div><div class="a" style="left:27px;top:0;width:1px;height:18px;background:#dfe7f2"></div><div class="a" style="left:28px;top:0;width:26px;height:18px;background:linear-gradient(#b8c7dc,#9cb0cd 48%,#6f8db9 52%,#7d9ac4);box-shadow:inset 0 0 0 1px rgba(255,255,255,.35)"></div><div class="a" style="left:54px;top:0;width:1px;height:18px;background:#e6d6d6"></div><div class="a" style="left:55px;top:0;width:47px;height:18px;background:linear-gradient(#e6a69a,#da8a7c 48%,#c63e26 52%,#d2624c);box-shadow:inset 0 0 0 1px rgba(255,255,255,.35)"></div><div class="a" style="left:9px;top:9px;width:11px;height:5px;background:#fff;border:1px solid #33445e"></div><div class="a" style="left:36px;top:4px;width:11px;height:10px;border:1px solid #33445e;background:#fff"><div class="a" style="left:2px;top:2px;width:5px;height:4px;background:#6a88b8;border:1px solid #33445e"></div></div><svg class="a" style="left:74px;top:4px;width:11px;height:10px" viewBox="0 0 11 10"><path d="M1.5 1.5l8 7M9.5 1.5l-8 7" stroke="#4a2a2a" stroke-width="4.2" stroke-linecap="square"/><path d="M1.5 1.5l8 7M9.5 1.5l-8 7" stroke="#fff" stroke-width="2.6" stroke-linecap="square"/></svg></div>
<div class="a" style="left:221px;top:84px;width:6px;height:160px;background:linear-gradient(#b8c8dc,#aebfd8 60%,#98b0d2 92%,#3462a3)"></div>
<div class="a" style="left:1303px;top:84px;width:6px;height:166px;background:linear-gradient(#86a4d0,#7e9ecc 88%,#3462a3)"></div>
<div id="client" class="a"></div>
<div class="grip" style="left:232px;top:94px;height:12px"></div>
<div class="t " style="left:239px;top:92px;letter-spacing:0px">Local</div>
<div class="t " style="left:276px;top:92px;letter-spacing:0px">Marcar</div>
<div class="t " style="left:322px;top:92px;letter-spacing:0px">Arquivos</div>
<div class="t " style="left:379px;top:92px;letter-spacing:0px">Comandos</div>
<div class="t " style="left:446px;top:92px;letter-spacing:-0.6px">Sessão</div>
<div class="t " style="left:490px;top:92px;letter-spacing:0px">Opções</div>
<div class="t " style="left:539px;top:92px;letter-spacing:0px">Remoto</div>
<div class="t " style="left:590px;top:92px;letter-spacing:0px">Ajuda</div>
<div class="grip" style="left:232px;top:117px;height:16px"></div>
<svg class="i" style="left:239px;top:117px"><use href="#cmp"/></svg>
<svg class="i" style="left:262px;top:117px"><use href="#syncf"/></svg>
<svg class="i" style="left:285px;top:117px"><use href="#sync"/></svg>
<div class="t " style="left:305px;top:117px;">Sincronizar</div>
<div class="sep" style="left:372px;top:113px;height:22px"></div>
<svg class="i" style="left:378px;top:117px"><use href="#cons"/></svg>
<svg class="i" style="left:400px;top:117px"><use href="#putty"/></svg>
<div class="sep" style="left:424px;top:113px;height:22px"></div>
<svg class="i" style="left:430px;top:117px"><use href="#syncb"/></svg>
<div class="grip" style="left:460px;top:117px;height:16px"></div>
<svg class="i" style="left:467px;top:117px"><use href="#gear"/></svg>
<div class="sep" style="left:490px;top:113px;height:22px"></div>
<svg class="i" style="left:496px;top:117px"><use href="#queue"/></svg>
<div class="t " style="left:517px;top:117px;">Fila</div>
<div class="dd" style="left:542px;top:123px"></div>
<div class="grip" style="left:596px;top:117px;height:16px"></div>
<div class="t " style="left:603px;top:118px;letter-spacing:-.1px">Ajustes de transferência</div>
<div class="combo" style="left:733px;top:114px;width:147px"><div class="t" style="left:2px;top:4px">Padrão</div><div class="btn"></div></div>
<div class="grip" style="left:888px;top:117px;height:16px"></div>
<svg class="i" style="left:895px;top:117px"><use href="#tset"/></svg>
<div class="dd" style="left:917px;top:123px"></div>
<div class="a" style="left:228px;top:160px;width:1073px;height:1px;background:#a0a0a0"></div>
<div class="a" style="left:316px;top:140px;width:99px;height:21px;border:1px solid #a0a0a0;border-bottom:none;background:linear-gradient(#f4f4f4,#e4e4e4 50%,#d8d8d8)"></div>
<div class="a" style="left:228px;top:138px;width:89px;height:23px;border:1px solid #a0a0a0;border-bottom:none;background:#fff"></div>
<svg class="i" style="left:236px;top:142px"><use href="#mon"/></svg>
<div class="t " style="left:257px;top:142px;letter-spacing:-.4px">10.2.2.103</div>
<svg class="i" style="left:320px;top:144px"><use href="#newsess"/></svg>
<div class="t " style="left:343px;top:144px;letter-spacing:-.4px">Nova Sessão</div>
<div class="grip" style="left:232px;top:166px;height:17px"></div>
<div class="combo" style="left:237px;top:164px;width:148px"><div class="t" style="left:20px;top:4px">C: Disco Local</div><div class="btn"></div></div>
<svg class="i" style="left:239px;top:166px"><use href="#drive"/></svg>
<svg class="i" style="left:390px;top:166px"><use href="#openf"/></svg>
<svg class="i" style="left:413px;top:166px"><use href="#filter"/></svg>
<div class="grip" style="left:439px;top:166px;height:17px"></div>
<svg class="i" style="left:446px;top:166px"><use href="#back"/></svg>
<div class="dd g" style="left:468px;top:173px"></div>
<svg class="i" style="left:481px;top:166px"><use href="#fwd"/></svg>
<div class="dd g" style="left:503px;top:173px"></div>
<div class="grip" style="left:519px;top:166px;height:17px"></div>
<svg class="i" style="left:526px;top:166px"><use href="#parentd"/></svg>
<svg class="i" style="left:549px;top:166px"><use href="#rootd"/></svg>
<svg class="i" style="left:572px;top:166px"><use href="#home"/></svg>
<svg class="i" style="left:595px;top:166px"><use href="#refr"/></svg>
<div class="sep" style="left:618px;top:162px;height:24px"></div>
<svg class="i" style="left:624px;top:166px"><use href="#tree"/></svg>
<div class="grip" style="left:232px;top:192px;height:17px"></div>
<svg class="i" style="left:239px;top:192px"><use href="#upl"/></svg>
<div class="t dis" style="left:260px;top:194px;">Upload</div>
<div class="dd g" style="left:305px;top:200px"></div>
<div class="sep" style="left:318px;top:189px;height:24px"></div>
<svg class="i" style="left:324px;top:192px"><use href="#edit"/></svg>
<div class="t dis" style="left:345px;top:194px;">Editar</div>
<div class="dd g" style="left:382px;top:200px"></div>
<svg class="i" style="left:395px;top:192px"><use href="#xdel"/></svg>
<svg class="i" style="left:418px;top:192px"><use href="#ren"/></svg>
<svg class="i" style="left:440px;top:192px"><use href="#props"/></svg>
<div class="t dis" style="left:461px;top:194px;">Propriedades</div>
<div class="sep" style="left:539px;top:189px;height:24px"></div>
<svg class="i" style="left:545px;top:192px"><use href="#newf"/></svg>
<div class="t " style="left:566px;top:194px;">Novo</div>
<div class="dd" style="left:600px;top:200px"></div>
<div class="grip" style="left:616px;top:192px;height:17px"></div>
<svg class="i" style="left:623px;top:193px"><use href="#plus"/></svg>
<svg class="i" style="left:646px;top:193px"><use href="#minus"/></svg>
<svg class="i" style="left:669px;top:193px"><use href="#fsel"/></svg>
<div class="grip" style="left:771px;top:166px;height:17px"></div>
<div class="combo" style="left:776px;top:164px;width:113px"><div class="t" style="left:20px;top:4px">/ &lt;diretório rai</div><div class="btn"></div></div>
<svg class="i" style="left:778px;top:166px"><use href="#sfold"/></svg>
<svg class="i" style="left:894px;top:166px"><use href="#openf"/></svg>
<svg class="i" style="left:917px;top:166px"><use href="#filter"/></svg>
<div class="grip" style="left:943px;top:166px;height:17px"></div>
<svg class="i" style="left:950px;top:166px"><use href="#back"/></svg>
<div class="dd g" style="left:972px;top:173px"></div>
<svg class="i" style="left:985px;top:166px"><use href="#fwd"/></svg>
<div class="dd g" style="left:1007px;top:173px"></div>
<div class="grip" style="left:1023px;top:166px;height:17px"></div>
<svg class="i" style="left:1030px;top:166px"><use href="#pdis"/></svg>
<svg class="i" style="left:1053px;top:166px"><use href="#rdis"/></svg>
<svg class="i" style="left:1076px;top:166px"><use href="#home"/></svg>
<svg class="i" style="left:1099px;top:166px"><use href="#refr"/></svg>
<div class="sep" style="left:1122px;top:162px;height:24px"></div>
<svg class="i" style="left:1128px;top:166px"><use href="#find"/></svg>
<div class="t " style="left:1148px;top:167px;">Localizar arquivos</div>
<div class="sep" style="left:1251px;top:162px;height:24px"></div>
<svg class="i" style="left:1257px;top:166px"><use href="#tree"/></svg>
<div class="grip" style="left:771px;top:192px;height:17px"></div>
<svg class="i" style="left:778px;top:192px"><use href="#upl"/></svg>
<div class="t dis" style="left:799px;top:194px;">Download</div>
<div class="dd g" style="left:860px;top:200px"></div>
<div class="sep" style="left:873px;top:189px;height:24px"></div>
<svg class="i" style="left:879px;top:192px"><use href="#edit"/></svg>
<div class="t dis" style="left:900px;top:194px;">Editar</div>
<div class="dd g" style="left:937px;top:200px"></div>
<svg class="i" style="left:950px;top:192px"><use href="#xdel"/></svg>
<svg class="i" style="left:973px;top:192px"><use href="#ren"/></svg>
<svg class="i" style="left:995px;top:192px"><use href="#props"/></svg>
<div class="t dis" style="left:1016px;top:194px;">Propriedades</div>
<div class="sep" style="left:1094px;top:189px;height:24px"></div>
<svg class="i" style="left:1100px;top:192px"><use href="#newf"/></svg>
<div class="t " style="left:1121px;top:194px;">Novo</div>
<div class="dd" style="left:1155px;top:200px"></div>
<div class="grip" style="left:1171px;top:192px;height:17px"></div>
<svg class="i" style="left:1178px;top:193px"><use href="#plus"/></svg>
<svg class="i" style="left:1201px;top:193px"><use href="#minus"/></svg>
<svg class="i" style="left:1224px;top:193px"><use href="#fsel"/></svg>
<div class="a" style="left:228px;top:214px;width:534px;height:21px;background:#bfcddb"></div>
<div class="t " style="left:233px;top:218px;color:#3a4450;letter-spacing:.3px">C:\DNC\Heidenhain\</div>
<div class="a" style="left:767px;top:214px;width:535px;height:21px;background:#99b4d1"></div>
<div class="t " style="left:772px;top:218px;color:#000">/</div>
<div class="list" style="left:228px;top:235px;width:534px;height:428px;border-left:none"></div>
<div class="list" style="left:767px;top:235px;width:535px;height:428px"></div>
<div class="hdr" style="left:228px;top:236px;width:533px"></div>
<div class="a" style="left:228px;top:236px;width:152px;height:22px;background:linear-gradient(#eaf6fd 0,#d9f0fc 50%,#bee6fd 51%,#a7d9f5);border-right:1px solid #c0dff3;opacity:.55"></div>
<div class="a" style="left:300px;top:237px;border-left:4px solid transparent;border-right:4px solid transparent;border-top:4px solid #72a5d6"></div>
<div class="hsep" style="left:380px;top:236px"></div>
<div class="csep" style="left:380px;top:258px;height:404px"></div>
<div class="hsep" style="left:450px;top:236px"></div>
<div class="csep" style="left:450px;top:258px;height:404px"></div>
<div class="hsep" style="left:570px;top:236px"></div>
<div class="csep" style="left:570px;top:258px;height:404px"></div>
<div class="hsep" style="left:720px;top:236px"></div>
<div class="csep" style="left:720px;top:258px;height:404px"></div>
<div class="t " style="left:237px;top:242px;">Nome</div>
<div class="t r" style="left:330px;top:242px;width:114px">Tamanho</div>
<div class="t " style="left:455px;top:242px;">Tipo</div>
<div class="t " style="left:575px;top:242px;">Data de modificação</div>
<div class="hdr" style="left:768px;top:236px;width:533px"></div>
<div class="a" style="left:1139px;top:236px;width:62px;height:22px;background:linear-gradient(#eaf6fd 0,#d9f0fc 50%,#bee6fd 51%,#a7d9f5);border-left:1px solid #c0dff3;border-right:1px solid #c0dff3;opacity:.55"></div>
<div class="a" style="left:1166px;top:237px;border-left:4px solid transparent;border-right:4px solid transparent;border-bottom:4px solid #72a5d6"></div>
<div class="hsep" style="left:918px;top:236px"></div>
<div class="csep" style="left:918px;top:258px;height:404px"></div>
<div class="hsep" style="left:989px;top:236px"></div>
<div class="csep" style="left:989px;top:258px;height:404px"></div>
<div class="hsep" style="left:1139px;top:236px"></div>
<div class="csep" style="left:1139px;top:258px;height:404px"></div>
<div class="hsep" style="left:1201px;top:236px"></div>
<div class="csep" style="left:1201px;top:258px;height:404px"></div>
<div class="hsep" style="left:1280px;top:236px"></div>
<div class="csep" style="left:1280px;top:258px;height:404px"></div>
<div class="t " style="left:775px;top:242px;">Nome</div>
<div class="t r" style="left:870px;top:242px;width:113px">Tamanho</div>
<div class="t " style="left:995px;top:242px;">Data de modificação</div>
<div class="t " style="left:1145px;top:242px;">Proprie...</div>
<div class="t " style="left:1207px;top:242px;">Direitos</div>
<svg class="i" style="left:233px;top:262px"><use href="#updir2"/></svg>
<div class="t " style="left:252px;top:264px;">..</div>
<div class="t r" style="left:330px;top:264px;width:113px"></div>
<div class="t " style="left:456px;top:264px;">Diretório acima</div>
<div class="t " style="left:575px;top:264px;">11/06/2018</div>
<div class="t " style="left:639px;top:264px;">16:40:04</div>
<svg class="i" style="left:235px;top:281px"><use href="#file"/></svg>
<div class="t " style="left:252px;top:283px;">teste</div>
<div class="t r" style="left:330px;top:283px;width:113px">6 KB</div>
<div class="t " style="left:456px;top:283px;">Arquivo</div>
<div class="t " style="left:575px;top:283px;">20/02/2018</div>
<div class="t " style="left:639px;top:283px;">15:21:07</div>
<svg class="i" style="left:235px;top:300px"><use href="#txt"/></svg>
<div class="t " style="left:252px;top:302px;">RGDNC.H</div>
<div class="t r" style="left:330px;top:302px;width:113px">7 KB</div>
<div class="t " style="left:456px;top:302px;">Arquivo H</div>
<div class="t " style="left:575px;top:302px;">27/02/2008</div>
<div class="t " style="left:639px;top:302px;">13:05:14</div>
<svg class="i" style="left:235px;top:319px"><use href="#txt"/></svg>
<div class="t " style="left:252px;top:321px;">ONLINE.H</div>
<div class="t r" style="left:330px;top:321px;width:113px">1.938 KB</div>
<div class="t " style="left:456px;top:321px;">Arquivo H</div>
<div class="t " style="left:575px;top:321px;">26/02/2010</div>
<div class="t " style="left:639px;top:321px;">13:49:57</div>
<svg class="i" style="left:235px;top:338px"><use href="#file"/></svg>
<div class="t " style="left:252px;top:340px;">ONLINE</div>
<div class="t r" style="left:330px;top:340px;width:113px">1.938 KB</div>
<div class="t " style="left:456px;top:340px;">Arquivo</div>
<div class="t " style="left:575px;top:340px;">27/02/2008</div>
<div class="t " style="left:639px;top:340px;">13:30:56</div>
<svg class="i" style="left:235px;top:357px"><use href="#file"/></svg>
<div class="t " style="left:252px;top:359px;">FRESA</div>
<div class="t r" style="left:330px;top:359px;width:113px">7 KB</div>
<div class="t " style="left:456px;top:359px;">Arquivo</div>
<div class="t " style="left:575px;top:359px;">27/02/2008</div>
<div class="t " style="left:639px;top:359px;">13:04:56</div>
<svg class="i" style="left:235px;top:376px"><use href="#pim"/></svg>
<div class="t " style="left:252px;top:378px;">000568.PIM</div>
<div class="t r" style="left:330px;top:378px;width:113px">1.606 KB</div>
<div class="t " style="left:456px;top:378px;">Arquivo PIM</div>
<div class="t " style="left:575px;top:378px;">30/12/1899</div>
<div class="t " style="left:639px;top:378px;">00:00:00</div>
<svg class="i" style="left:235px;top:395px"><use href="#pim"/></svg>
<div class="t " style="left:252px;top:397px;">000006.PIT</div>
<div class="t r" style="left:330px;top:397px;width:113px">3 KB</div>
<div class="t " style="left:456px;top:397px;">Arquivo PIT</div>
<div class="t " style="left:575px;top:397px;">01/03/2016</div>
<div class="t " style="left:639px;top:397px;">23:58:56</div>
<svg class="i" style="left:235px;top:414px"><use href="#txt"/></svg>
<div class="t " style="left:252px;top:416px;">4_0.TXT</div>
<div class="t r" style="left:330px;top:416px;width:113px">21.121 KB</div>
<div class="t " style="left:456px;top:416px;">Documento de Te...</div>
<div class="t " style="left:575px;top:416px;">30/12/1899</div>
<div class="t " style="left:639px;top:416px;">00:00:00</div>
<svg class="i" style="left:771px;top:262px"><use href="#updir2"/></svg>
<div class="a" style="left:790px;top:262px;width:10px;height:17px;border:1px dotted #000"></div>
<div class="t " style="left:791px;top:264px;">..</div>
<div class="t r" style="left:868px;top:264px;width:113px"></div>
<div class="t " style="left:995px;top:264px;">30/12/1899 00:00:00</div>
<svg class="i" style="left:774px;top:281px"><use href="#txt"/></svg>
<div class="t " style="left:791px;top:283px;">4_0.TXT</div>
<div class="t r" style="left:868px;top:283px;width:113px">21.121 KB</div>
<div class="t " style="left:995px;top:283px;">11/06/2018 06:21:28</div>
<svg class="i" style="left:774px;top:300px"><use href="#pim"/></svg>
<div class="t " style="left:791px;top:302px;">000006.PIT</div>
<div class="t r" style="left:868px;top:302px;width:113px">3 KB</div>
<div class="t " style="left:995px;top:302px;">30/12/1899 00:00:00</div>
<svg class="i" style="left:774px;top:319px"><use href="#pim"/></svg>
<div class="t " style="left:791px;top:321px;">000568.PIM</div>
<div class="t r" style="left:868px;top:321px;width:113px">1.606 KB</div>
<div class="t " style="left:995px;top:321px;">30/12/1899 00:00:00</div>
<svg class="i" style="left:774px;top:338px"><use href="#file"/></svg>
<div class="t " style="left:791px;top:340px;">FRESA</div>
<div class="t r" style="left:868px;top:340px;width:113px">7 KB</div>
<div class="t " style="left:995px;top:340px;">30/12/1899 00:00:00</div>
<svg class="i" style="left:774px;top:357px"><use href="#txt"/></svg>
<div class="t " style="left:791px;top:359px;">ONLINE.H</div>
<div class="t r" style="left:868px;top:359px;width:113px">1.938 KB</div>
<div class="t " style="left:995px;top:359px;">30/12/1899 00:00:00</div>
<svg class="i" style="left:774px;top:376px"><use href="#txt"/></svg>
<div class="t " style="left:791px;top:378px;">RGDNC.H</div>
<div class="t r" style="left:868px;top:378px;width:113px">7 KB</div>
<div class="t " style="left:995px;top:378px;">30/12/1899 00:00:00</div>
<div class="a" style="left:770px;top:259px;width:1px;height:403px;background:#c5d5ee"></div>
<div class="a" style="left:231px;top:259px;width:1px;height:401px;background:#e4e8ee"></div>
<div class="t " style="left:230px;top:669px;letter-spacing:-.25px">0 B de 25,9 MB em 0 de 8</div>
<div class="t " style="left:769px;top:669px;letter-spacing:-.25px">0 B de 24,0 MB em 0 de 6</div>
<div class="a" style="left:228px;top:686px;width:1073px;height:1px;background:#dcdcdc"></div>
<div class="a" style="left:1082px;top:688px;width:32px;height:17px;border-left:1px solid #dcdcdc;border-right:1px solid #dcdcdc"></div>
<div class="a" style="left:1117px;top:688px;width:67px;height:17px;border-left:1px solid #dcdcdc;border-right:1px solid #dcdcdc"></div>
<div class="a" style="left:1187px;top:688px;width:33px;height:17px;border-left:1px solid #dcdcdc;border-right:1px solid #dcdcdc"></div>
<div class="a" style="left:1222px;top:688px;width:78px;height:17px;border-left:1px solid #dcdcdc;border-right:1px solid #dcdcdc"></div>
<div class="a" style="left:1078px;top:688px;width:1px;height:17px;background:#dcdcdc"></div>
<svg class="a" style="left:1293px;top:695px;width:9px;height:9px" viewBox="0 0 9 9"><path d="M7 1h1v1H7zM4 4h1v1H4zM7 4h1v1H7zM1 7h1v1H1zM4 7h1v1H4zM7 7h1v1H7z" fill="#b8b8b8"/></svg>
<svg class="i" style="left:1090px;top:689px"><use href="#lock"/></svg>
<div class="t " style="left:1127px;top:689px;">WebDAV</div>
<svg class="i" style="left:1195px;top:689px"><use href="#net"/></svg>
<div class="t " style="left:1243px;top:689px;">0:00:58</div>
<div id="taskbar" class="a"></div>
<div class="a" style="left:246px;top:729px;width:58px;height:38px;border-radius:3px;border:1px solid rgba(200,215,240,.75);background:linear-gradient(165deg,rgba(255,255,255,.55) 0,rgba(255,255,255,.32) 45%,rgba(255,255,255,.18) 55%,rgba(255,255,255,.28) 100%);box-shadow:inset 0 0 0 1px rgba(30,50,90,.25)"></div>
<div class="a" style="left:680px;top:729px;width:58px;height:38px;border-radius:3px;border:1px solid rgba(170,190,225,.55);background:linear-gradient(165deg,rgba(255,255,255,.30) 0,rgba(255,255,255,.14) 45%,rgba(255,255,255,.05) 55%,rgba(255,255,255,.12) 100%);box-shadow:inset 0 0 0 1px rgba(20,40,80,.3)"></div>
<div class="a" style="left:742px;top:729px;width:58px;height:38px;border-radius:3px;border:1px solid rgba(170,190,225,.55);background:linear-gradient(165deg,rgba(255,255,255,.30) 0,rgba(255,255,255,.14) 45%,rgba(255,255,255,.05) 55%,rgba(255,255,255,.12) 100%);box-shadow:inset 0 0 0 1px rgba(20,40,80,.3)"></div>
<div class="a" style="left:804px;top:729px;width:58px;height:38px;border-radius:3px;border:1px solid rgba(200,215,240,.75);background:linear-gradient(165deg,rgba(255,255,255,.55) 0,rgba(255,255,255,.32) 45%,rgba(255,255,255,.18) 55%,rgba(255,255,255,.28) 100%);box-shadow:inset 0 0 0 1px rgba(30,50,90,.25)"></div>
<svg class="a" style="left:8px;top:729px;width:38px;height:38px;overflow:visible" viewBox="0 0 38 38"><defs><radialGradient id="orb" cx=".5" cy=".8" r=".75"><stop offset="0" stop-color="#4ad0f8"/><stop offset=".45" stop-color="#1a6ab0"/><stop offset="1" stop-color="#0e3a70"/></radialGradient><linearGradient id="orbh" x1="0" y1="0" x2="0" y2="1"><stop offset="0" stop-color="#fff" stop-opacity=".55"/><stop offset="1" stop-color="#fff" stop-opacity=".05"/></linearGradient></defs><circle cx="19" cy="19" r="18" fill="url(#orb)" stroke="#5a7aa8" stroke-width="1"/><path d="M9 11.5c3-1.5 6-1 9 1l-1.5 6.5c-3-2-6-2.3-9-1z" fill="#f25a22"/><path d="M19.5 12.5c3 2 6 2.2 9.5.5l-1.5 6.5c-3 1.7-6.2 1.5-9.5-.5z" fill="#80c040"/><path d="M7.3 19c3-1.2 6-1 9 1l-1.5 6.5c-3-2-6-2.2-9-1z" fill="#1ab0f0"/><path d="M17.8 20c3 2 6 2.2 9.5.5l-1.5 6.5c-3 1.7-6.2 1.5-9.5-.5z" fill="#fcc010"/><ellipse cx="19" cy="11" rx="14" ry="9" fill="url(#orbh)"/></svg>
<svg class="a" style="left:72px;top:730px;width:34px;height:34px;overflow:visible" viewBox="0 0 34 34"><path d="M17 6.5c-6.5 0-11 5-11 11.2S10.5 29 17 29c4.5 0 8-2.3 9.5-5.8h-6c-1 1.2-2.2 1.8-3.7 1.8-3.2 0-5.5-2.3-5.8-5.6H27c.1-.8.1-1.5.1-2.3C27 11.2 22.5 6.5 17 6.5zm-5.5 8.8c.5-2.7 2.6-4.4 5.4-4.4s4.8 1.7 5.1 4.4z" fill="#30a8e8" stroke="#1a70b8" stroke-width=".6"/><path d="M4 28c-4-5 9-21 24-24 5-1 5.5 2.5 3 7" stroke="#f0c020" stroke-width="2.6" fill="none"/><path d="M7 30c4 1.5 12-2 19-9" stroke="#f0c020" stroke-width="1.8" fill="none"/></svg>
<svg class="a" style="left:134px;top:733px;width:32px;height:30px;overflow:visible" viewBox="0 0 32 30"><path d="M2 4h10l2 3h16v20H2z" fill="#e8c060" stroke="#a88020" stroke-width=".8"/><rect x="5" y="2" width="6" height="4" fill="#4a4"/><rect x="13" y="3" width="5" height="4" fill="#d33"/><rect x="20" y="5" width="6" height="4" fill="#39e"/><path d="M2 10h28v17H2z" fill="#f8e4a8"/><path d="M8 16h16v10H8z" fill="#6aa8e0"/><path d="M11 20h10v6H11z" fill="#f8e4a8"/></svg>
<svg class="a" style="left:196px;top:732px;width:30px;height:32px;overflow:visible" viewBox="0 0 30 32"><rect x="4" y="3" width="22" height="26" rx="2" fill="#b8d8f0" stroke="#6a9ac8"/><rect x="7" y="5" width="20" height="24" rx="2" fill="#d0e8fa" stroke="#7aaad8" stroke-width=".7"/><circle cx="15" cy="16" r="8" fill="#f08020" stroke="#fff" stroke-width="1.5"/><path d="M12.5 11.5v9l7-4.5z" fill="#fff"/></svg>
<svg class="a" style="left:259px;top:732px;width:32px;height:32px;overflow:visible" viewBox="0 0 32 32"><circle cx="16" cy="16" r="14.5" fill="#db4437"/><path d="M16 16L3.4 23.3A14.5 14.5 0 0 0 16 30.5z" fill="#0f9d58"/><path d="M3.4 23.3A14.5 14.5 0 0 1 3.4 8.7L16 16z" fill="#0f9d58"/><path d="M16 16h14.5A14.5 14.5 0 0 1 16 30.5z" fill="#ffcd40"/><path d="M16 16l12.6-7.3A14.5 14.5 0 0 1 30.5 16z" fill="#ffcd40"/><path d="M16 16L28.6 8.7h0L16 1.5A14.5 14.5 0 0 0 3.4 8.7z" fill="#db4437"/><circle cx="16" cy="16" r="6.5" fill="#fff"/><circle cx="16" cy="16" r="5" fill="#4285f4"/></svg>
<svg class="a" style="left:320px;top:739px;width:34px;height:17px;overflow:visible" viewBox="0 0 34 17"><rect x="0" y="0" width="34" height="17" fill="#fff"/><path d="M2 2h6v13H2z" fill="#c41a20"/><path d="M4 5l4 5-3 5" stroke="#fff" stroke-width="1.5" fill="none"/><text x="9" y="14" font-family="Liberation Sans" font-weight="bold" font-size="13" fill="#111" textLength="25" lengthAdjust="spacingAndGlyphs">DNC</text></svg>
<svg class="a" style="left:383px;top:732px;width:32px;height:32px;overflow:visible" viewBox="0 0 32 32"><rect x="0" y="0" width="32" height="32" fill="#e6e6e6"/><rect x="0" y="0" width="32" height="6" fill="#26b030"/><text x="1" y="5" font-family="Liberation Sans" font-size="5" font-weight="bold" fill="#111" textLength="30">HEIDENHAIN</text><rect x="3" y="9" width="6" height="9" fill="#8ab0d8"/><rect x="13" y="15" width="15" height="11" fill="#fff" stroke="#777"/><path d="M20 26v3M16 29h8" stroke="#777"/><path d="M6 18v4h7" stroke="#d04040" fill="none"/></svg>
<svg class="a" style="left:445px;top:732px;width:33px;height:32px;overflow:visible" viewBox="0 0 33 32"><circle cx="16.5" cy="16" r="16" fill="#f80a0a"/><path d="M-1 8h22l-2 5H-1zM-1 16h18l-2 4H-1z" fill="#3560a0"/><path d="M0 4h14v4H0zM0 13h17v3H0z" fill="#f80a0a"/></svg>
<svg class="a" style="left:506px;top:731px;width:34px;height:34px;overflow:visible" viewBox="0 0 34 34"><g transform="rotate(-45 17 17)"><rect x="9" y="0" width="16" height="34" fill="#111" stroke="#ddd" stroke-width=".8"/><path d="M7 5h2M7 11h2M7 17h2M7 23h2M7 29h2M25 5h2M25 11h2M25 17h2M25 23h2M25 29h2" stroke="#f0e020" stroke-width="2.5"/><path d="M13 4c3-1 7 0 7 3v10h-4V8c-1.5 0-3-1-3-4z" fill="#c8c8c8"/><path d="M12 21h4v4h-4zM18 21h4v4h-4zM15 27h4v4h-4z" fill="#f0e020"/></g></svg>
<svg class="a" style="left:569px;top:732px;width:32px;height:32px;overflow:visible" viewBox="0 0 32 32"><rect x="0" y="0" width="32" height="32" fill="#d4d4d4"/><path d="M8 4l14 12M8 4c0 8 6 13 14 12" stroke="#8a8a30" stroke-width="1.4" fill="none"/><circle cx="15" cy="10" r="1.2" fill="#8a8a30"/><path d="M15 15v5M11 21h8" stroke="#8a8a30" stroke-width="1.5"/><path d="M22 7l5-4M23 10l5-4" stroke="#d03030" stroke-width="1"/><text x="1.5" y="30" font-family="Liberation Sans" font-weight="bold" font-size="9" fill="#000" textLength="29" lengthAdjust="spacingAndGlyphs">NCnet</text></svg>
<svg class="a" style="left:632px;top:733px;width:30px;height:30px;overflow:visible" viewBox="0 0 30 30"><circle cx="15" cy="15" r="13.5" fill="#14a8ee"/><circle cx="7" cy="7" r="6" fill="#14a8ee"/><circle cx="23" cy="23" r="6" fill="#14a8ee"/><text x="8.5" y="22" font-family="Liberation Sans" font-weight="bold" font-size="19" fill="#fff">S</text></svg>
<svg class="a" style="left:692px;top:733px;width:34px;height:32px;overflow:visible" viewBox="0 0 34 32"><path d="M4 4h18l3 3v18H4z" fill="#fff4c8" stroke="#e6a820"/><path d="M8 10h24v16H8z" fill="#fdf6dc" stroke="#d8a030"/><path d="M8 10l12 9 12-9" fill="none" stroke="#d8a030"/><circle cx="17" cy="20" r="9" fill="#f8c830" stroke="#c89010"/><path d="M13 19l4 3 4-4" stroke="#a06808" stroke-width="1.5" fill="none"/></svg>
<svg class="a" style="left:755px;top:735px;width:32px;height:26px;overflow:visible" viewBox="0 0 32 26"><rect x="0" y="0" width="30" height="25" fill="#fafafa" stroke="#888"/><rect x="3" y="5" width="13" height="16" fill="#3c8a7a" stroke="#333" stroke-width=".6"/><path d="M19 6h6M19 9h6M19 12h6M19 15h6M19 18h6" stroke="#888"/><rect x="26" y="4" width="2" height="8" fill="#2a9a5a"/></svg>
<svg class="a" style="left:816px;top:732px;width:34px;height:32px;overflow:visible" viewBox="0 0 34 32"><path d="M1 1h12l-3.5 3.5 5 5-3 3-5-5L1 11z" fill="#2a7ae0"/><path d="M11 14a6 6 0 0 1 12 0v3h-3v-3a3 3 0 0 0-6 0v3h-3z" fill="#777" stroke="#333" stroke-width=".7"/><rect x="8" y="16" width="18" height="13" rx="1.5" fill="#5a5a5a" stroke="#222" stroke-width=".7"/><path d="M10 19h14M10 22h14M10 25h14" stroke="#8a8a8a"/><path d="M33 31H21l3.5-3.5-5-5 3-3 5 5L31 19z" fill="#22b022"/></svg>
<div class="t" style="left:1125px;top:738px;color:#fff;">PT</div>
<svg class="a" style="left:1154px;top:747px;width:10px;height:5px;overflow:visible" viewBox="0 0 10 5"><path d="M0 5L5 0l5 5z" fill="#fff"/></svg>
<svg class="a" style="left:1176px;top:743px;width:16px;height:12px;overflow:visible" viewBox="0 0 16 12"><path d="M1 10h2v2H1zM4.5 8h2v4h-2zM8 6h2v6H8zM11.5 3h2v9h-2zM15 0h1.5v12H15z" fill="#fff"/></svg>
<svg class="a" style="left:1200px;top:742px;width:16px;height:16px;overflow:visible" viewBox="0 0 16 16"><path d="M1.5 1v15" stroke="#fff" stroke-width="1.5"/><path d="M2 1.5h6l1 1.5h6l-2 3 2 3H9L8 7.5H2z" fill="#fff"/></svg>
<svg class="a" style="left:1223px;top:741px;width:16px;height:16px;overflow:visible" viewBox="0 0 16 16"><rect x="1" y="3" width="9" height="12" fill="#fff" stroke="#333" stroke-width=".6"/><path d="M10 5h4v5c0 2-2 3-3 3v3" stroke="#fff" stroke-width="1.5" fill="none"/><path d="M11 2v3M13 2v3" stroke="#fff" stroke-width="1.2"/></svg>
<svg class="a" style="left:1248px;top:742px;width:17px;height:16px;overflow:visible" viewBox="0 0 17 16"><path d="M1 5h3l4-4v14l-4-4H1z" fill="#eee"/><circle cx="12" cy="11" r="4.5" fill="#e02020" stroke="#fff" stroke-width=".8"/><path d="M9.5 8.5l5 5" stroke="#fff" stroke-width="1.4"/></svg>
<div class="t" style="left:1297px;top:734px;color:#fff;">17:14</div>
<div class="t" style="left:1280px;top:750px;color:#fff;">11/06/2018</div>
<div class="a" style="left:1352px;top:729px;width:14px;height:39px;border:1px solid rgba(160,180,215,.6);border-right:none;background:linear-gradient(90deg,rgba(255,255,255,.18),rgba(255,255,255,.08))"></div>
</body></html>
